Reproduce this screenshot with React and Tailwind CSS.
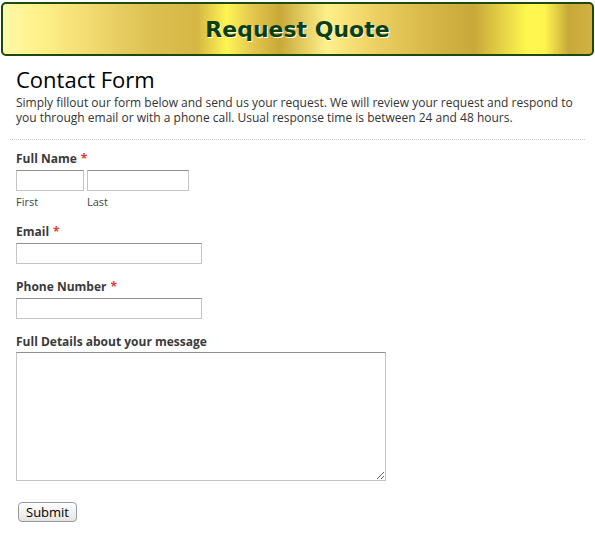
import React from 'react';

const font = { fontFamily: '"Open Sans", "DejaVu Sans", sans-serif' };

function Req() {
  return <span className="text-[#e03a3a] ml-1">*</span>;
}

function Label({ children, required }) {
  return (
    <div className="text-[12px] leading-[16px] font-bold text-[#3a3a3a]">
      {children}
      {required && <Req />}
    </div>
  );
}

const inputCls =
  "block h-[21px] bg-white border border-[#c4c4c4] border-t-[#8f8f8f] outline-none";

export default function App() {
  return (
    <div className="w-[595px] h-[538px] bg-white overflow-hidden" style={font}>
      {/* Banner */}
      <div className="mt-[2px] mx-px h-[54px] rounded-[5px] border-2 border-[#1c4a0c] bg-[linear-gradient(90deg,#fff8a8_0%,#fff28a_6%,#f2da70_15%,#dcc052_25%,#d6b744_33%,#fff552_38%,#e6ca50_42%,#c9a838_47%,#fff08a_55%,#f0d468_62%,#d8b848_72%,#c8a83a_80%,#fff850_89%,#fff450_92%,#c8a838_96%,#d2b242_100%)] flex items-center justify-center">
        <h1
          className="text-[22px] font-bold text-[#0b3f0e] [text-shadow:1px_1px_0_#ffffff]"
          style={{ fontFamily: '"DejaVu Sans", Verdana, sans-serif' }}
        >
          Request Quote
        </h1>
      </div>

      <div className="px-4">
        <h2 className="mt-[10px] text-[22px] leading-[26px] text-black">Contact Form</h2>
        <p className="mt-[3px] text-[12px] leading-[15px] text-[#333]">
          Simply fillout our form below and send us your request. We will review your request and respond to you through email or with a phone call. Usual response time is between 24 and 48 hours.
        </p>
      </div>

      <div className="mt-[14px] mx-[10px] border-t border-dotted border-[#c8c8c8]" />

      <form className="px-4 pt-[11px]">
        <Label required>Full Name</Label>
        <div className="mt-[3px] flex gap-[3px]">
          <div>
            <input className={inputCls + " w-[68px]"} />
            <div className="mt-[4px] text-[11px] leading-[14px] text-[#444]">First</div>
          </div>
          <div>
            <input className={inputCls + " w-[102px]"} />
            <div className="mt-[4px] text-[11px] leading-[14px] text-[#444]">Last</div>
          </div>
        </div>

        <div className="mt-[15px]">
          <Label required>Email</Label>
          <input className={inputCls + " mt-[3px] w-[186px]"} />
        </div>

        <div className="mt-[15px]">
          <Label required>Phone Number</Label>
          <input className={inputCls + " mt-[3px] w-[186px]"} />
        </div>

        <div className="mt-[15px]">
          <Label>Full Details about your message</Label>
          <textarea className="block mt-[2px] w-[370px] h-[129px] bg-white border border-[#c4c4c4] border-t-[#8f8f8f] outline-none" />
        </div>

        <button
          type="button"
          className="mt-[21px] ml-[2px] h-[20px] px-[7px] rounded-[4px] border border-[#9a9a9a] bg-[linear-gradient(180deg,#ffffff,#e4e4e4)] text-[13px] leading-[18px] text-black"
        >
          Submit
        </button>
      </form>
    </div>
  );
}
